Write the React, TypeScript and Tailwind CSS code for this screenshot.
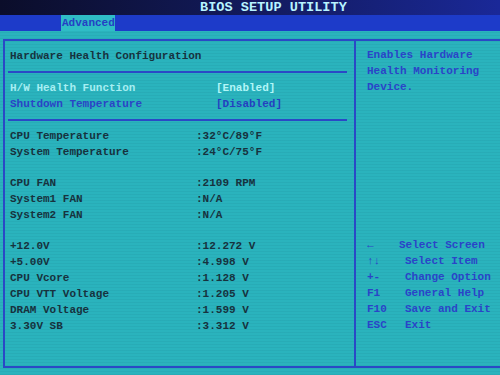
const sensors: [string, string][][] = [
  [
    ['CPU Temperature', ':32°C/89°F'],
    ['System Temperature', ':24°C/75°F'],
  ],
  [
    ['CPU FAN', ':2109 RPM'],
    ['System1 FAN', ':N/A'],
    ['System2 FAN', ':N/A'],
  ],
  [
    ['+12.0V', ':12.272 V'],
    ['+5.00V', ':4.998 V'],
    ['CPU Vcore', ':1.128 V'],
    ['CPU VTT Voltage', ':1.205 V'],
    ['DRAM Voltage', ':1.599 V'],
    ['3.30V SB', ':3.312 V'],
  ],
];

const help: { key: string; label: string; w: string }[] = [
  { key: '←', label: 'Select Screen', w: 'w-[32px]' },
  { key: '↑↓', label: 'Select Item', w: 'w-[38px]' },
  { key: '+-', label: 'Change Option', w: 'w-[38px]' },
  { key: 'F1', label: 'General Help', w: 'w-[38px]' },
  { key: 'F10', label: 'Save and Exit', w: 'w-[38px]' },
  { key: 'ESC', label: 'Exit', w: 'w-[38px]' },
];

export default function App() {
  return (
    <div className="w-[500px] h-[375px] overflow-hidden flex flex-col bg-[#2ab3bd] font-['Liberation_Mono','DejaVu_Sans_Mono',monospace] text-[11px] leading-[16px] font-bold">
      {/* title strip */}
      <div className="h-[15px] shrink-0 bg-gradient-to-r from-[#0b0d2a] via-[#121a5c] to-[#1a2898] pl-[200px] flex items-center">
        <span className="text-[13.6px] leading-[15px] text-[#b8f4ff] tracking-[0px]">BIOS SETUP UTILITY</span>
      </div>

      {/* menu bar */}
      <div className="h-[16px] shrink-0 bg-[#1d3bc9] pl-[61px] flex">
        <div className="w-[54px] bg-[#2fbcc6] text-[#2440c4] pl-[1px] leading-[16px]">Advanced</div>
      </div>

      {/* main */}
      <div className="flex-1 pt-[8px] pl-[3px] bg-[repeating-linear-gradient(0deg,rgba(0,40,60,0.05)_0px,rgba(0,40,60,0.05)_1px,transparent_1px,transparent_3px)]">
        <div className="h-[329px] flex border-t-2 border-l-2 border-b-2 border-[#2a49c6]">
          {/* left column */}
          <div className="w-[351px] shrink-0 border-r-2 border-[#2a49c6] pt-[7px] text-[#17323e]">
            <div className="pl-[5px]">Hardware Health Configuration</div>
            <div className="ml-[3px] mr-[7px] mt-[7px] h-[2px] bg-[#2a49c6]" />
            <div className="mt-[7px] pl-[5px] flex">
              <span className="w-[206px] text-[#a6eef2]">H/W Health Function</span>
              <span className="text-[#b2f6f8]">[Enabled]</span>
            </div>
            <div className="pl-[5px] flex">
              <span className="w-[206px] text-[#2a44c6]">Shutdown Temperature</span>
              <span className="text-[#2440c0]">[Disabled]</span>
            </div>
            <div className="ml-[3px] mr-[7px] mt-[7px] h-[2px] bg-[#2a49c6]" />
            <div className="mt-[7px] pl-[5px] flex flex-col gap-[15px]">
              {sensors.map((group, gi) => (
                <div key={gi}>
                  {group.map(([name, value]) => (
                    <div key={name} className="flex">
                      <span className="w-[186px]">{name}</span>
                      <span>{value}</span>
                    </div>
                  ))}
                </div>
              ))}
            </div>
          </div>

          {/* right column */}
          <div className="flex-1 pt-[6px] pl-[11px] text-[#2a44c8]">
            <div>Enables Hardware</div>
            <div>Health Monitoring</div>
            <div>Device.</div>
            <div className="mt-[142px]">
              {help.map((h) => (
                <div key={h.key} className="flex">
                  <span className={h.w}>{h.key}</span>
                  <span>{h.label}</span>
                </div>
              ))}
            </div>
          </div>
        </div>
      </div>
    </div>
  );
}
